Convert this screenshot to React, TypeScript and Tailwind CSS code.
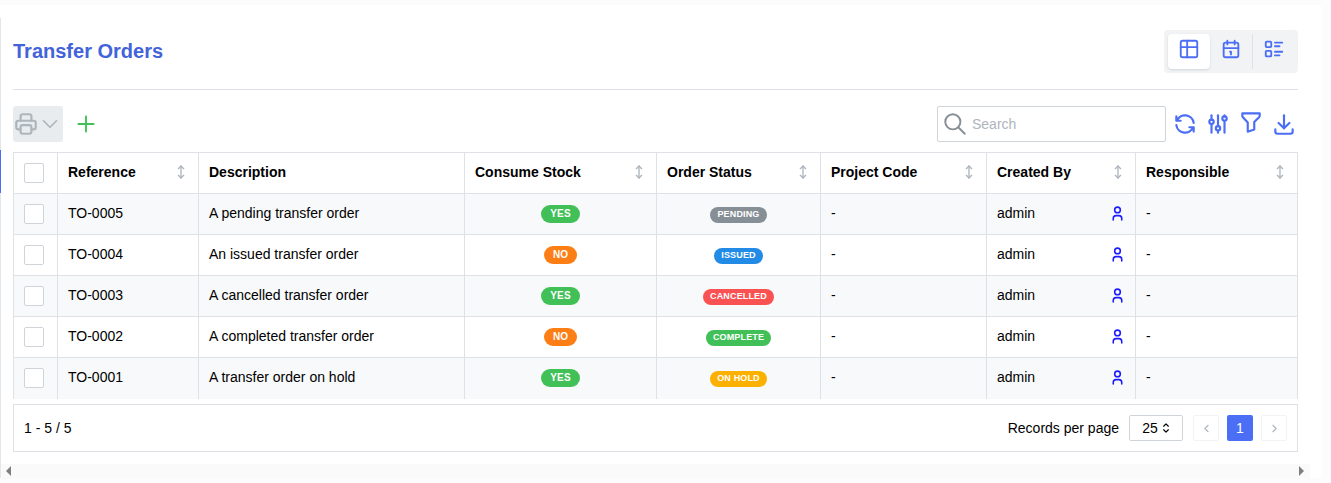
import React from "react";
import {
  TbAdjustments, TbChevronDown, TbChevronLeft, TbChevronRight, TbDownload, TbFilter,
  TbListDetails, TbPlus, TbPrinter, TbRefresh, TbSearch, TbSelector, TbUser, TbArrowsVertical, TbTable,
} from "react-icons/tb";

const CalendarOne = () => (
  <svg width="22" height="22" viewBox="0 0 24 24" fill="none" stroke="currentColor" strokeWidth="2" strokeLinecap="round" strokeLinejoin="round">
    <path d="M4 7a2 2 0 0 1 2-2h12a2 2 0 0 1 2 2v12a2 2 0 0 1-2 2H6a2 2 0 0 1-2-2V7z" />
    <path d="M16 3v4M8 3v4M4 11h16M11 15h1M12 15v3" />
  </svg>
);

const rows = [
  { ref: "TO-0005", desc: "A pending transfer order", stock: true, status: "PENDING", color: "bg-[#868e96]" },
  { ref: "TO-0004", desc: "An issued transfer order", stock: false, status: "ISSUED", color: "bg-[#228be6]" },
  { ref: "TO-0003", desc: "A cancelled transfer order", stock: true, status: "CANCELLED", color: "bg-[#fa5252]" },
  { ref: "TO-0002", desc: "A completed transfer order", stock: false, status: "COMPLETE", color: "bg-[#40c057]" },
  { ref: "TO-0001", desc: "A transfer order on hold", stock: true, status: "ON HOLD", color: "bg-[#fcb000]" },
];

const headers = [
  { t: "Reference", w: "w-[141px]" },
  { t: "Description", w: "w-[266px]", nosort: true },
  { t: "Consume Stock", w: "w-[192px]" },
  { t: "Order Status", w: "w-[164px]" },
  { t: "Project Code", w: "w-[166px]" },
  { t: "Created By", w: "w-[149px]" },
  { t: "Responsible", w: "w-[162px]" },
];

const Box = () => <div className="w-5 h-5 rounded-[2px] border border-[#ced4da] bg-white" />;

export default function App() {
  return (
    <div className="h-[483px] w-[1331px] overflow-hidden bg-[#fcfcfd] text-[14px] text-black font-['Liberation_Sans',Arial,sans-serif]">
      <div className="mt-[5px] w-[1322px] h-[473px] bg-white rounded-tr-[4px] relative">
        <div className="absolute left-0 top-[13px] bottom-0 w-px bg-[#e3e6ea]" />
        <div className="absolute left-0 top-[145px] h-[43px] w-px bg-[#4c6ef5]" />
        <div className="pl-[13px] pr-6">
          <div className="flex items-center justify-between h-[85px] pt-[25px] pb-[16px] border-b border-[#dee2e6]">
            <h1 className="text-[20px] font-bold text-[#4263d9] -mt-[2px]">Transfer Orders</h1>
            <div className="flex items-center h-[43px] w-[134px] bg-[#f1f3f5] rounded-[4px] px-1 text-[#4c6ef5]">
              <div className="w-[42px] h-[35px] bg-white rounded-[4px] shadow-sm flex items-center justify-center pb-[6px]"><TbTable size={22} /></div>
              <div className="w-[42px] h-[35px] flex items-center justify-center pb-[6px]"><CalendarOne /></div>
              <div className="w-[42px] h-[35px] border-l border-[#dee2e6] flex items-center justify-center pb-[6px]"><TbListDetails size={22} /></div>
            </div>
          </div>

          <div className="flex items-center justify-between h-[62px] pt-[16px] pb-[10px]">
            <div className="flex items-center">
              <div className="flex items-center w-[50px] h-[36px] bg-[#e9ecef] rounded-[3px] text-[#adb5bd]">
                <TbPrinter size={26} />
                <TbChevronDown size={26} strokeWidth={1.5} className="-ml-[2px]" />
              </div>
              <TbPlus size={26} strokeWidth={1.75} className="ml-[10px] text-[#40c057]" />
            </div>
            <div className="flex items-center text-[#4c6ef5] mr-px">
              <div className="flex items-center w-[229px] h-[36px] bg-white border border-[#ced4da] rounded-[2px] pl-[4px] text-[#868e96]">
                <TbSearch size={26} strokeWidth={1.75} />
                <span className="ml-[4px] text-[#adb5bd]">Search</span>
              </div>
              <TbRefresh size={26} className="ml-[6px]" />
              <TbAdjustments size={26} className="ml-[7px]" />
              <TbFilter size={26} className="ml-[7px] -mt-[5px]" />
              <TbDownload size={26} className="ml-[7px]" />
            </div>
          </div>

          <table className="w-[1285px] table-fixed border-collapse border border-[#dee2e6] border-b-0">
            <thead>
              <tr className="h-[41px] border-b border-[#dee2e6]">
                <th className="w-[44px] border-r border-[#dee2e6] pl-[10px]"><Box /></th>
                {headers.map((h) => (
                  <th key={h.t} className={`${h.w} border-r border-[#dee2e6] pl-[10px] pr-[9px] pb-[2px] text-left font-bold`}>
                    <div className="flex items-center justify-between">
                      <span>{h.t}</span>
                      {!h.nosort && <TbArrowsVertical size={16} className="text-[#adb5bd]" />}
                    </div>
                  </th>
                ))}
              </tr>
            </thead>
            <tbody>
              {rows.map((r, i) => (
                <tr key={r.ref} className={`h-[41px] ${i < 4 ? "border-b border-[#dee2e6]" : ""} ${i % 2 === 0 ? "bg-[#f8f9fa]" : "bg-white"}`}>
                  <td className="border-r border-[#dee2e6] pl-[10px]"><Box /></td>
                  <td className="border-r border-[#dee2e6] px-[10px] pb-[2px]">{r.ref}</td>
                  <td className="border-r border-[#dee2e6] px-[10px] pb-[2px]">{r.desc}</td>
                  <td className="border-r border-[#dee2e6] px-[10px]">
                    <div className="flex justify-center">
                      <span className={`flex items-center h-[18px] px-[9px] pb-[1px] rounded-full text-[10px] font-bold tracking-[0.1px] text-white ${r.stock ? "bg-[#40c057]" : "bg-[#fd7e14]"}`}>{r.stock ? "YES" : "NO"}</span>
                    </div>
                  </td>
                  <td className="border-r border-[#dee2e6] px-[10px]">
                    <div className="flex justify-center pt-[1px]">
                      <span className={`flex items-center h-[16px] px-[7px] rounded-full text-[9px] font-bold tracking-[0.15px] text-white ${r.color}`}>{r.status}</span>
                    </div>
                  </td>
                  <td className="border-r border-[#dee2e6] px-[10px] pb-[2px]">-</td>
                  <td className="border-r border-[#dee2e6] px-[10px] pb-[2px]">
                    <div className="flex items-center justify-between">
                      <span>admin</span>
                      <TbUser size={17} strokeWidth={2.2} className="text-[#1c1cff] -mr-px" />
                    </div>
                  </td>
                  <td className="px-[10px] pb-[2px]">-</td>
                </tr>
              ))}
            </tbody>
          </table>

          <div className="mt-[5px] w-[1285px] h-[48px] border border-[#dee2e6] flex items-center justify-between pl-[10px] pr-[10px] pt-[1px]">
            <span>1 - 5 / 5</span>
            <div className="flex items-center">
              <span>Records per page</span>
              <div className="ml-[10px] w-[54px] h-[26px] border border-[#ced4da] rounded-[2px] flex items-center justify-center gap-[1px] pl-[3px]">
                <span>25</span>
                <TbSelector size={14} />
              </div>
              <div className="ml-[10px] w-[26px] h-[26px] border border-[#f1f3f5] rounded-[2px] flex items-center justify-center text-[#adb5bd]"><TbChevronLeft size={13} /></div>
              <div className="ml-2 w-[26px] h-[26px] bg-[#4c6ef5] rounded-[2px] text-white flex items-center justify-center">1</div>
              <div className="ml-2 w-[26px] h-[26px] border border-[#f1f3f5] rounded-[2px] flex items-center justify-center text-[#adb5bd]"><TbChevronRight size={13} /></div>
            </div>
          </div>

          <div className="mt-[12px] -ml-3 w-[1309px] h-[15px] bg-[#fafafa] flex items-center justify-between pl-[5px] pr-[6px]">
            <div className="w-0 h-0 border-y-[5px] border-y-transparent border-r-[5px] border-r-[#7f7f7f]" />
            <div className="w-0 h-0 border-y-[5px] border-y-transparent border-l-[5px] border-l-[#7f7f7f]" />
          </div>
        </div>
      </div>
    </div>
  );
}
